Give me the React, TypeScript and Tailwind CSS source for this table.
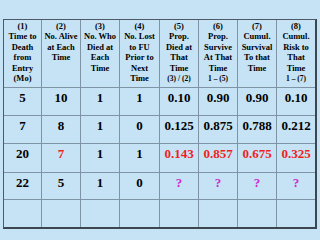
const header: { n: string; lines: string[]; formula?: string }[] = [
  { n: "(1)", lines: ["Time to", "Death", "from", "Entry", "(Mo)"] },
  { n: "(2)", lines: ["No. Alive", "at Each", "Time"] },
  { n: "(3)", lines: ["No. Who", "Died at", "Each", "Time"] },
  { n: "(4)", lines: ["No. Lost", "to FU", "Prior to", "Next", "Time"] },
  { n: "(5)", lines: ["Prop.", "Died at", "That", "Time"], formula: "(3) / (2)" },
  { n: "(6)", lines: ["Prop.", "Survive", "At That", "Time"], formula: "1 – (5)" },
  { n: "(7)", lines: ["Cumul.", "Survival", "To that", "Time"] },
  { n: "(8)", lines: ["Cumul.", "Risk to", "That", "Time"], formula: "1 – (7)" },
];

type Cell = { v: string; tone?: "red" | "pink" };

const rows: Cell[][] = [
  [{ v: "5" }, { v: "10" }, { v: "1" }, { v: "1" }, { v: "0.10" }, { v: "0.90" }, { v: "0.90" }, { v: "0.10" }],
  [{ v: "7" }, { v: "8" }, { v: "1" }, { v: "0" }, { v: "0.125" }, { v: "0.875" }, { v: "0.788" }, { v: "0.212" }],
  [
    { v: "20" },
    { v: "7", tone: "red" },
    { v: "1" },
    { v: "1" },
    { v: "0.143", tone: "red" },
    { v: "0.857", tone: "red" },
    { v: "0.675", tone: "red" },
    { v: "0.325", tone: "red" },
  ],
  [{ v: "22" }, { v: "5" }, { v: "1" }, { v: "0" }, { v: "?", tone: "pink" }, { v: "?", tone: "pink" }, { v: "?", tone: "pink" }, { v: "?", tone: "pink" }],
  [{ v: "" }, { v: "" }, { v: "" }, { v: "" }, { v: "" }, { v: "" }, { v: "" }, { v: "" }],
];

const toneClass = (t?: string) =>
  t === "red" ? "text-[#f21d1d]" : t === "pink" ? "text-[#cc2bd0]" : "text-black";

export default function App() {
  return (
    <div
      className="w-[320px] h-[240px] bg-[#c5e3f5] pt-[19px] pl-[3px]"
      style={{ fontFamily: '"Liberation Serif", "Times New Roman", serif' }}
    >
      <div className="w-fit border-l border-t border-[#4d5a66] border-r-2 border-b-2 border-r-[#3b4651] border-b-[#3b4651]">
        <div className="grid grid-cols-[38px_39px_39px_40px_39px_39px_39px_38px] grid-rows-[68px_28px_28px_29px_27px_27px]">
          {/* header */}
          {header.map((h, i) => (
            <div
              key={h.n}
              className={`${i < 7 ? "border-r" : ""} border-b border-[#7e93a3] text-center font-bold text-[8.5px] leading-[10.4px] pt-[1px]`}
            >
              <div>{h.n}</div>
              {h.lines.map((l) => (
                <div key={l} className="whitespace-nowrap">
                  {l}
                </div>
              ))}
              {h.formula && (
                <div className="whitespace-nowrap text-[7.5px] mt-[1px]">{h.formula}</div>
              )}
            </div>
          ))}

          {/* data rows */}
          {rows.map((r, ri) =>
            r.map((c, ci) => (
              <div
                key={`${ri}-${ci}`}
                className={`${ci < 7 ? "border-r" : ""} ${ri < rows.length - 1 ? "border-b" : ""} border-[#7e93a3] text-center font-bold text-[13px] leading-[13px] pt-[3px] ${toneClass(c.tone)}`}
              >
                {c.v}
              </div>
            ))
          )}
        </div>
      </div>
    </div>
  );
}
